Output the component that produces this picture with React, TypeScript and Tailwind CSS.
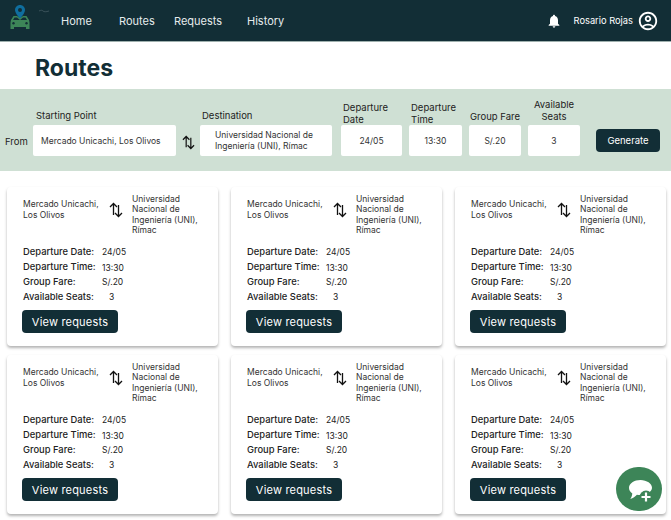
import { MdNotifications, MdOutlineAccountCircle } from 'react-icons/md';

const navLinks = [
  { label: 'Home', width: 'w-[58px]' },
  { label: 'Routes', width: 'w-[55px]' },
  { label: 'Requests', width: 'w-[73px]' },
  { label: 'History', width: 'w-auto' },
];

function SwapArrows({ className }: { className: string }) {
  return (
    <svg viewBox="0 0 14 16" fill="none" stroke="#111" strokeWidth="1.300" className={`shrink-0 ${className}`}>
      <path d="M4.500 13V1.500M1 5l3.500-3.500L8 5" />
      <path d="M9.500 3v11.500M6 11l3.500 3.500L13 11" />
    </svg>
  );
}

function Field({ label, value, wrap, labelClass, valueClass = 'justify-center' }: { label: string; value: string; wrap: string; labelClass: string; valueClass?: string }) {
  return (
    <div className={`flex flex-col ${wrap}`}>
      <div className={`text-[9.5px] leading-[11.5px] text-[#222] ${labelClass}`}>{label}</div>
      <div className={`h-[31px] pt-[2px] bg-white rounded-[2px] flex items-center text-[8.5px] text-[#333] ${valueClass}`}>{value}</div>
    </div>
  );
}

function RouteCard() {
  return (
    <div className="h-[159px] bg-white rounded-[4px] shadow-[0_2px_3px_rgba(0,0,0,0.3)] pl-[16px] pt-[7px]">
      <div className="flex items-start h-[43px]">
        <div className="w-[86px] mt-[5px] text-[8.5px] leading-[10.5px] text-[#333]">
          Mercado Unicachi,
          <br />
          Los Olivos
        </div>
        <SwapArrows className="w-[14px] h-[16px] mt-[8px] mr-[9px]" />
        <div className="text-[8.5px] leading-[10.3px] text-[#333]">
          Universidad
          <br />
          Nacional de
          <br />
          Ingeniería (UNI),
          <br />
          Rímac
        </div>
      </div>
      <div className="mt-[8px] text-[9.4px] text-[#222]">
        <div className="flex h-[15px] items-center">
          <span className="w-[79px] font-medium">Departure Date:</span>
          <span className="text-[8.5px]">24/05</span>
        </div>
        <div className="flex h-[15px] items-center">
          <span className="w-[79px] font-medium">Departure Time:</span>
          <span className="text-[8.5px] mt-[2px]">13:30</span>
        </div>
        <div className="flex h-[15px] items-center">
          <span className="w-[79px] font-medium">Group Fare:</span>
          <span className="text-[8.5px]">S/.20</span>
        </div>
        <div className="flex h-[14px] items-center">
          <span className="w-[86px] font-medium">Available Seats:</span>
          <span className="text-[8.5px]">3</span>
        </div>
      </div>
      <button className="mt-[6px] -ml-[1px] block w-[96px] h-[23px] pt-[1px] bg-[#122e36] rounded-[4px] text-white text-[11px] tracking-[0.2px]">
        View requests
      </button>
    </div>
  );
}

export default function App() {
  return (
    <div className="relative h-[520px] w-[671px] overflow-hidden bg-white font-['Inter',sans-serif]">
      <header className="h-[42px] pt-[1px] bg-[#122e36] border-b border-[#9fb0ae] flex items-center text-white">
        <div className="w-[61px] shrink-0 pl-[8px]">
          <svg viewBox="0 0 44 30" className="w-[44px] h-[30px] -mt-[4px]">
            <path d="M5.500 12h3.500l3 2 3-2h3.500l2.500 4 .5 2.500V25h-3.500v-2H6v2H2.500v-6.500l.5-2.500z" fill="#3d8558" />
            <path d="M6.500 13.500h2.500l3 2.500 3-2.500h2.500l1.500 2.500H5z" fill="#122e36" />
            <circle cx="5.500" cy="19.300" r="1.200" fill="#122e36" />
            <circle cx="18.500" cy="19.300" r="1.200" fill="#122e36" />
            <path d="M12 1c-2.800 0-5 2.200-5 5 0 3.400 5 8.500 5 8.500s5-5.100 5-8.500c0-2.800-2.200-5-5-5z" fill="#0f6e9e" />
            <circle cx="12" cy="6" r="2" fill="#122e36" />
            <path d="M31 7c2-1 3-1 4 0s3 1 6 0" stroke="#4a6168" strokeWidth="0.700" fill="none" />
          </svg>
        </div>
        <nav className="flex text-[11px] text-[#e6eced]">
          {navLinks.map((n) => (
            <a key={n.label} className={n.width}>
              {n.label}
            </a>
          ))}
        </nav>
        <div className="ml-auto flex items-center pr-[12px]">
          <MdNotifications className="w-[16px] h-[16px] mr-[12px]" />
          <span className="text-[9.3px] mr-[4px]">Rosario Rojas</span>
          <MdOutlineAccountCircle className="w-[22px] h-[22px]" />
        </div>
      </header>

      <h1 className="h-[47px] pt-[6px] pl-[35px] flex items-center text-[23px] font-bold text-[#122e36]">Routes</h1>

      <section className="h-[82px] bg-[#cfe0d4] flex items-end pb-[15px] pl-[5px]">
        <div className="text-[9.5px] text-[#222] w-[28px] h-[31px] pt-[3px] flex items-center">From</div>
        <Field label="Starting Point" value="Mercado Unicachi, Los Olivos" wrap="w-[143px]" labelClass="pl-[3px] mb-[4px]" valueClass="pl-[8px]" />
        <SwapArrows className="w-[13px] h-[15px] ml-[6px] mr-[5px] mb-[6px]" />
        <div className="flex flex-col w-[132px]">
          <div className="text-[9.5px] leading-[11.5px] text-[#222] pl-[2px] mb-[4px]">Destination</div>
          <div className="h-[31px] pt-[1px] bg-white rounded-[2px] flex items-center pl-[15px] text-[8.5px] leading-[11px] text-[#333]">
            <span>
              Universidad Nacional de
              <br />
              Ingeniería (UNI), Rímac
            </span>
          </div>
        </div>
        <Field label="Departure Date" value="24/05" wrap="w-[61px] ml-[9px]" labelClass="pl-[2px]" />
        <Field label="Departure Time" value="13:30" wrap="w-[53px] ml-[7px]" labelClass="pl-[2px]" />
        <Field label="Group Fare" value="S/.20" wrap="w-[52px] ml-[7px]" labelClass="text-center whitespace-nowrap mb-[3px]" />
        <Field label="Available Seats" value="3" wrap="w-[52px] ml-[7px]" labelClass="text-center mb-[3px]" />
        <button className="ml-[16px] mb-[4px] w-[64px] h-[23px] pt-[1px] bg-[#122e36] rounded-[4px] text-white text-[9.5px]">Generate</button>
      </section>

      <main className="grid grid-cols-[211px_211px_211px] gap-x-[13px] gap-y-[9px] pl-[7px] pt-[16px]">
        {Array.from({ length: 6 }).map((_, i) => (
          <RouteCard key={i} />
        ))}
      </main>

      <button className="absolute left-[616px] top-[467px] w-[46px] h-[44px] rounded-full bg-[#3d8558]">
        <svg viewBox="0 0 46 44" className="w-[46px] h-[44px]">
          <path d="M24.500 13c-6.300 0-11.500 3.400-11.500 7.800 0 2.300 1.300 4.200 3.300 5.600-.2 2-.9 3.900-2 5.600 2.700-.8 5-2.300 6.600-4.200 1.100.2 2.300.3 3.600.3 6.300 0 11.500-3.200 11.500-7.300S30.800 13 24.500 13z" fill="#fff" />
          <circle cx="30" cy="30" r="6.500" fill="#3d8558" />
          <path d="M30 25.500v9M25.500 30h9" stroke="#fff" strokeWidth="2.200" />
        </svg>
      </button>
    </div>
  );
}
